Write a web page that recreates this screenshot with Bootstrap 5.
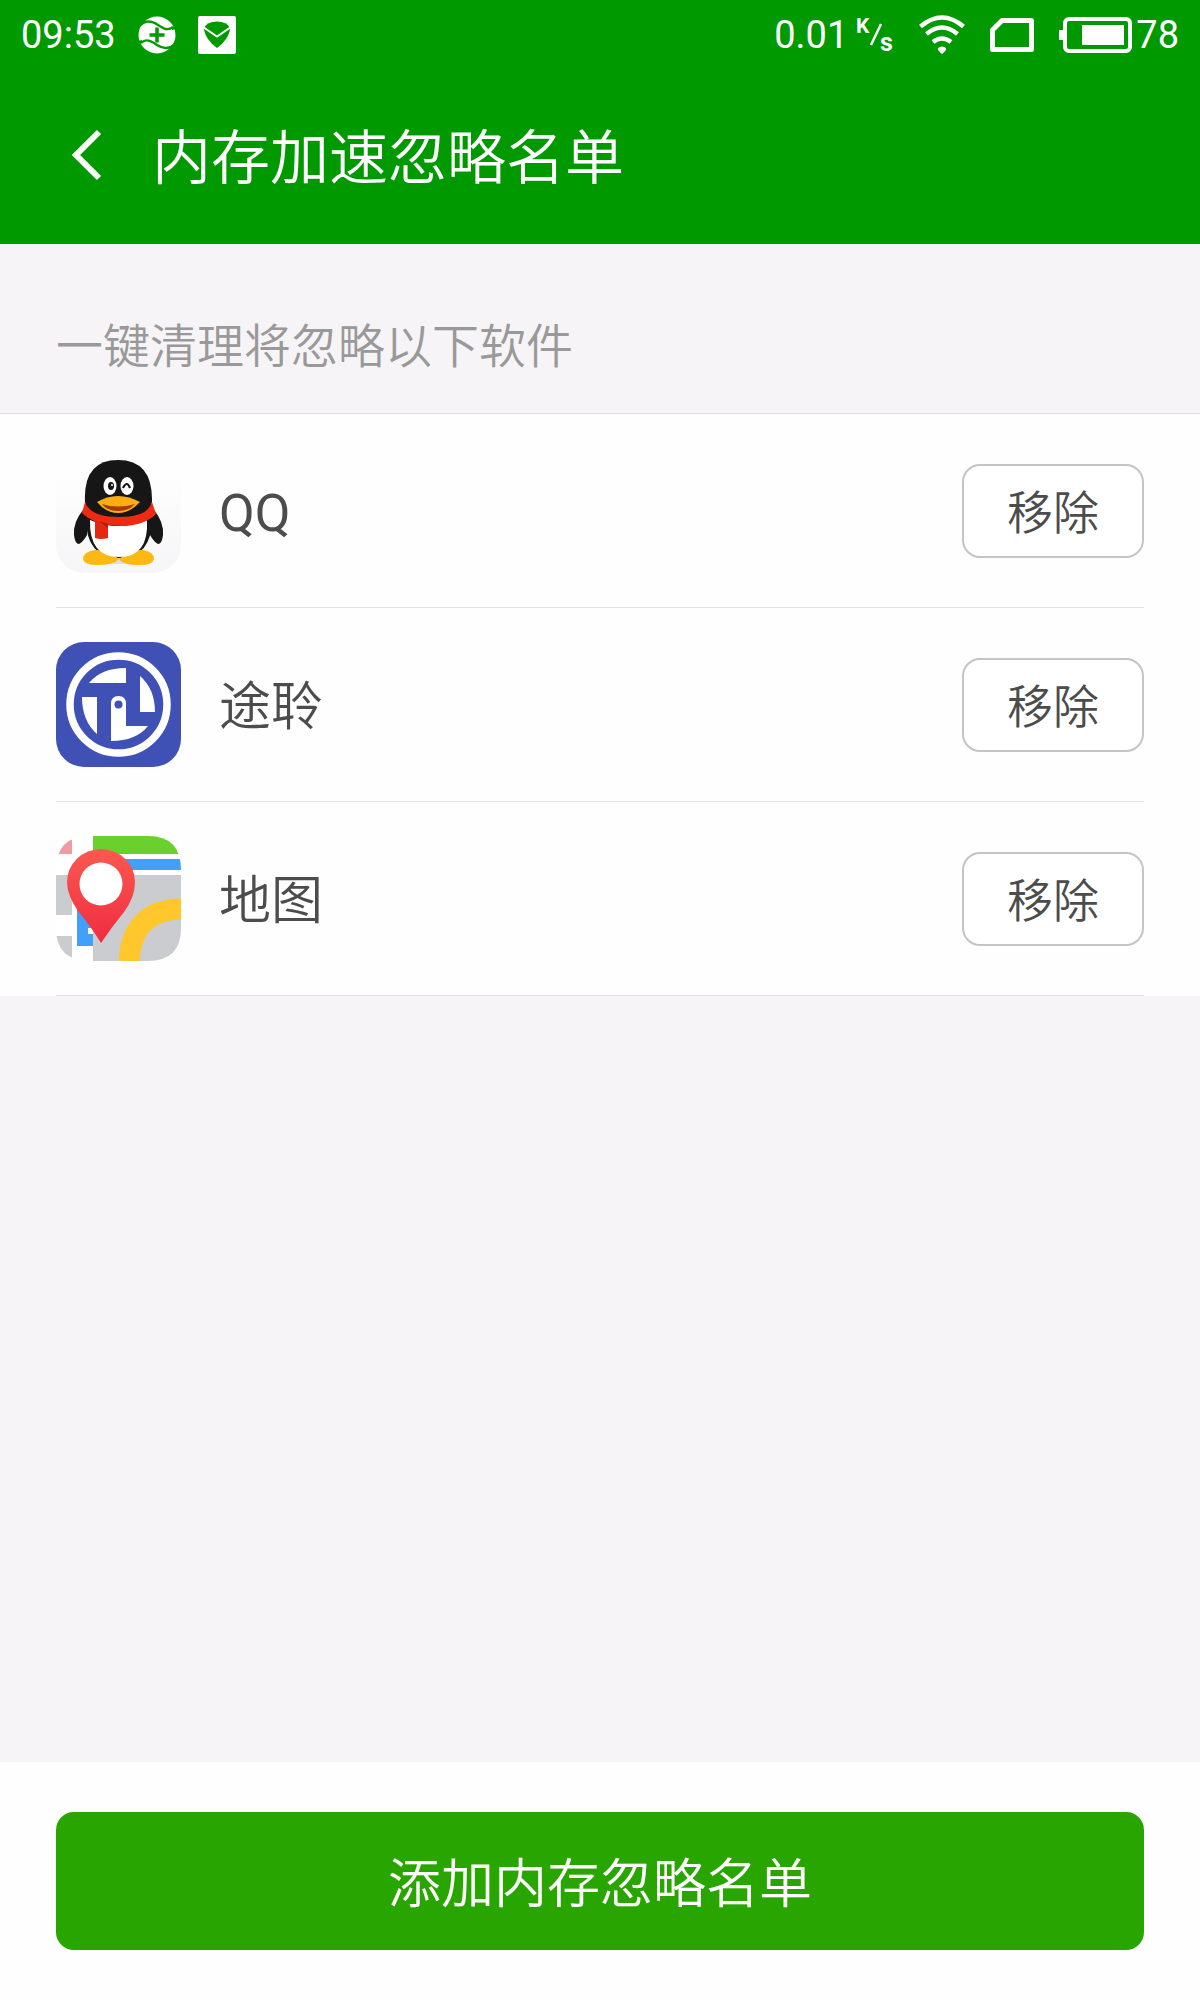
<!DOCTYPE html>
<html lang="zh-CN">
<head>
<meta charset="utf-8">
<meta name="viewport" content="width=device-width, initial-scale=1">
<title>内存加速忽略名单</title>
<link href="https://cdn.jsdelivr.net/npm/bootstrap@5.3.0/dist/css/bootstrap.min.css" rel="stylesheet">
<style>
body{font-family:Roboto,"Noto Sans CJK SC",sans-serif;font-weight:350;background:#f6f4f7;color:#4c4c4c}
.app-head{background:#009900;color:#fff}
.status-line{height:70px;padding:0 21px;font-size:38px;font-weight:400;line-height:70px}
.status-line svg{flex:none}
.status-left{gap:22px}
.status-right{gap:25px}
.title-line{height:174px;padding:0 56px 4px 64px}
.title-line h1{font-size:59px;line-height:88px;font-weight:350;padding-top:8px}
.back-link{width:88px;padding:0 8px}
.edge{padding-left:56px;padding-right:56px}
.hint{height:170px;padding-top:68px;font-size:47px;line-height:70px;color:#999;border-bottom:1px solid #dcdcdc}
.app-list{background:#fefefe}
.app-item{height:194px;border-bottom:1px solid #e2e2e4}
.app-name{font-size:52px;line-height:78px;margin-left:38px;padding-top:6px}
.latin{font-weight:400}
.btn{--bs-btn-font-weight:350;--bs-btn-border-radius:18px;padding:4px 0 0}
.btn-remove{--bs-btn-color:#4c4c4c;--bs-btn-border-color:#c4c4c4;--bs-btn-border-width:2px;--bs-btn-bg:#fff;--bs-btn-hover-bg:#f2f2f2;width:182px;height:94px;font-size:46px;line-height:70px}
.app-foot{background:#fefefe;padding-top:50px;padding-bottom:50px}
.btn-add{--bs-btn-color:#fff;--bs-btn-bg:#29a500;--bs-btn-hover-bg:#239000;--bs-btn-hover-color:#fff;height:138px;font-size:53px;line-height:80px;padding-top:8px}
</style>
<script src="https://cdn.jsdelivr.net/npm/bootstrap@5.3.0/dist/js/bootstrap.bundle.min.js"></script>
</head>
<body class="d-flex flex-column min-vh-100">
<header class="app-head">
  <div class="status-line d-flex align-items-center justify-content-between">
    <div class="status-left d-flex align-items-center">
      <span>09:53</span>
      <svg width="38" height="38" viewBox="0 0 38 38" aria-hidden="true">
        <circle cx="19" cy="19" r="18.500" fill="#fff"/>
        <path d="M0 11C8 3 14 5 20 9s10 6 15 2M38 27c-7 7-13 6-19 2S8 22 3 27" fill="none" stroke="#090" stroke-width="2.400"/>
        <path d="M0 0h5v6l-5 6zM38 38h-5v-6l5-6zM34 11l3-1 1 3-4 1zM4 27l-3 1-1-3 4-1z" fill="#090"/>
        <path d="M19 11.500v15M11.500 19h15" stroke="#090" stroke-width="3.500"/>
      </svg>
      <svg width="38" height="38" viewBox="0 0 38 38" aria-hidden="true">
        <rect width="38" height="38" rx="2" fill="#fff"/>
        <path d="M6 12Q9 5.500 19 5.500T32 12q0 5-4 11t-9 9q-5-3-9-9T6 12z" fill="#090"/>
        <path d="M5 11l14 9.500L33 11" fill="none" stroke="#fff" stroke-width="2"/>
      </svg>
    </div>
    <div class="status-right d-flex align-items-center">
      <div class="d-flex align-items-center">
        <span>0.01</span>
        <svg class="ms-2" width="38" height="54" viewBox="0 -8 38 54" aria-label="K/s">
          <g fill="#fff" font-weight="700"><text x="0" y="17" font-size="21">K</text><text x="24" y="35" font-size="25">s</text></g>
          <path d="M15 29L25 8" stroke="#fff" stroke-width="2.500"/>
        </svg>
      </div>
      <svg width="46" height="40" viewBox="0 0 46 40" aria-hidden="true">
        <g fill="none" stroke="#fff" stroke-width="4.500">
          <path d="M1.500 11.500Q23-6.500 44.500 11.500M7.500 19Q23 6 38.500 19M14 27q9-7 18 0"/>
        </g>
        <path d="M19 33q4-3 8 0 1 2-4 6-5-4-4-6z" fill="#fff"/>
      </svg>
      <svg width="44" height="34" viewBox="0 0 44 34" aria-hidden="true">
        <path d="M12 2.500h29.500v29h-39V12z" fill="none" stroke="#fff" stroke-width="5" stroke-linejoin="round"/>
      </svg>
      <div class="d-flex align-items-center">
        <svg width="73" height="36" viewBox="0 0 73 36" aria-hidden="true">
          <rect x="6" y="2" width="65" height="32" rx="4" fill="none" stroke="#fff" stroke-width="4"/>
          <path d="M0 13h5v10H0zM23 8h42v20H23z" fill="#fff"/>
        </svg>
        <span class="ms-1">78</span>
      </div>
    </div>
  </div>
  <div class="title-line d-flex align-items-center">
    <a class="back-link" href="#" aria-label="返回">
      <svg class="d-block" width="32" height="52" viewBox="0 0 32 52"><path d="M27 3L4 26l23 23" fill="none" stroke="#fff" stroke-width="6"/></svg>
    </a>
    <h1 class="m-0">内存加速忽略名单</h1>
  </div>
</header>
<main class="flex-grow-1">
  <div class="hint edge">一键清理将忽略以下软件</div>
  <ul class="app-list edge list-unstyled m-0">
    <li class="app-item d-flex align-items-center">
      <svg width="125" height="125" viewBox="0 0 125 125" aria-hidden="true">
        <defs><linearGradient id="tile" x2="0" y2="1"><stop offset=".2" stop-color="#fefefe"/><stop offset="1" stop-color="#f6f5f7"/></linearGradient>
        <linearGradient id="pin" x2="0" y2="1"><stop stop-color="#fa5950"/><stop offset="1" stop-color="#f02c40"/></linearGradient></defs>
        <rect width="125" height="125" rx="28" fill="url(#tile)"/>
        <ellipse cx="63" cy="113" rx="32" ry="3" fill="#ddd"/>
        <path d="M27 62Q17 74 18 87q1 9 5 9 4-2 8-9L34 66zM98 62q10 12 9 25-1 9-5 9-4-2-8-9L91 66z" fill="#161617"/>
        <path d="M30 70Q30 110 63 110T96 70L94 55H32z" fill="#161617"/>
        <path d="M63 111Q52 101 39 102q-12 2-12 9 1 6 14 6 17 0 22-6zM63 111q11-10 24-9 11 2 11 9-1 6-14 6-17 0-21-6z" fill="#fdb913"/>
        <path d="M34 72Q33 109 63 109T91 72Q62 84 34 72z" fill="#fff"/>
        <path d="M29 54Q27 12 62 12q35 0 34 42Q91 76 62 76T29 54z" fill="#161617"/>
        <path d="M29 54q5 15 34 15t33-15l4 12Q88 78 65 78 38 77 26 65z" fill="#ee2b12"/>
        <path d="M39 73l13 3v14q-7 2-13 0z" fill="#e52611"/><path d="M43 73l9 7v-4z" fill="#ad1d10"/>
        <ellipse cx="54" cy="38" rx="6.500" ry="9" fill="#fff"/><ellipse cx="71" cy="38" rx="6.500" ry="9" fill="#fff"/>
        <ellipse cx="55" cy="38" rx="3" ry="4" fill="#161617"/><circle cx="56" cy="37" r="1" fill="#fff"/>
        <path d="M67 40q4-8 7 0" fill="none" stroke="#161617" stroke-width="2.200"/>
        <path d="M41 54q10-6 21-6t22 6Q74 65 62 65T41 54z" fill="#fdad12"/>
        <path d="M46 56q16 5 33 0-6 7-17 7t-16-7z" fill="#a63c0b"/>
      </svg>
      <span class="app-name latin flex-grow-1">QQ</span>
      <button type="button" class="btn btn-remove" aria-label="移除 QQ">移除</button>
    </li>
    <li class="app-item d-flex align-items-center">
      <svg width="125" height="125" viewBox="0 0 125 125" aria-hidden="true">
        <rect width="125" height="125" rx="28" fill="#3f51b5"/>
        <circle cx="62.500" cy="62.500" r="48.500" fill="none" stroke="#fff" stroke-width="7.500"/>
        <path d="M33 41Q45 26 70 26v15zM84 34q15 13 15 36H84zM26 55h15v37Q26 79 26 55zM55 62q0-8 7.500-8T70 62v22h22Q80 99 55 99z" fill="#fff"/>
        <circle cx="62.500" cy="62.500" r="4" fill="#3f51b5"/>
      </svg>
      <span class="app-name flex-grow-1">途聆</span>
      <button type="button" class="btn btn-remove" aria-label="移除 途聆">移除</button>
    </li>
    <li class="app-item d-flex align-items-center">
      <svg width="125" height="125" viewBox="0 0 125 125" aria-hidden="true">
        <clipPath id="round"><path d="M34 0H92Q125 0 125 34V92Q125 125 92 125H34Q0 125 0 92V34Q0 0 34 0z"/></clipPath>
        <g clip-path="url(#round)">
          <path fill="#fff" d="M0 0h125v125H0z"/>
          <path fill="#f09aa4" d="M0 0h16v18H0z"/><path fill="#69d02d" d="M37 0h88v18H37z"/>
          <path fill="#42a0f8" d="M60 23h65v11H60zM21 60h16v50H21z"/>
          <path fill="#cacccf" d="M37 39h88v86H37zM0 39h16v40H0zM0 100h16v25H0z"/>
          <path d="M73 125Q76 73 127 73" fill="none" stroke="#ffc72b" stroke-width="21"/>
        </g>
        <path d="M32 92h5v6h-5z" fill="#fff"/>
        <path d="M45 107Q36 92 22 75 11 59 11 46a34 33 0 0 1 68 0q0 15-11 30Q55 92 45 107z" fill="url(#pin)"/>
        <circle cx="45" cy="48" r="21.500" fill="#fff"/>
      </svg>
      <span class="app-name flex-grow-1">地图</span>
      <button type="button" class="btn btn-remove" aria-label="移除 地图">移除</button>
    </li>
  </ul>
</main>
<footer class="app-foot edge">
  <button type="button" class="btn btn-add w-100">添加内存忽略名单</button>
</footer>
</body>
</html>
